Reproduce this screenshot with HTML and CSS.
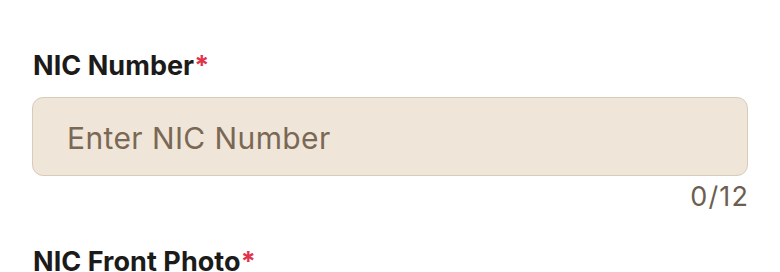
FILE: index.html
```html
<!DOCTYPE html>
<html>
<head>
<meta charset="utf-8">
<link rel="stylesheet" href="styles.css">
</head>
<body>
<div class="form">
  <div class="field">
    <label class="label">NIC Number<span class="req">*</span></label>
    <div class="input"><span class="placeholder">Enter NIC Number</span></div>
    <div class="counter">0/12</div>
  </div>
  <div class="field">
    <label class="label">NIC Front Photo<span class="req">*</span></label>
  </div>
</div>
</body>
</html>
```

FILE: styles.css
```css
html, body {
  margin: 0;
  padding: 0;
  background: #ffffff;
  font-family: Inter, "Noto Sans", sans-serif;
}
.form {
  padding: 50px 32px 0 32px;
  display: flex;
  flex-direction: column;
  gap: 33px;
}
.field {
  display: flex;
  flex-direction: column;
}
.label {
  font-size: 27px;
  font-weight: 700;
  color: #1c1b19;
  line-height: 32px;
  letter-spacing: 0.05px;
  padding-left: 1px;
}
.req {
  color: #e0324b;
  letter-spacing: 0;
}
.input {
  margin-top: 15px;
  box-sizing: border-box;
  height: 79px;
  border: 1.5px solid #d8ccb8;
  border-radius: 11px;
  background: #efe6d9;
  display: flex;
  align-items: center;
  padding-left: 34px;
}
.placeholder {
  font-size: 30px;
  letter-spacing: 0.4px;
  color: #7a6855;
  margin-top: 2px;
}
.counter {
  align-self: flex-end;
  font-size: 27px;
  letter-spacing: 1.2px;
  margin-right: -1.2px;
  color: #6c5e50;
  line-height: 32px;
  margin-top: 5px;
}
```
